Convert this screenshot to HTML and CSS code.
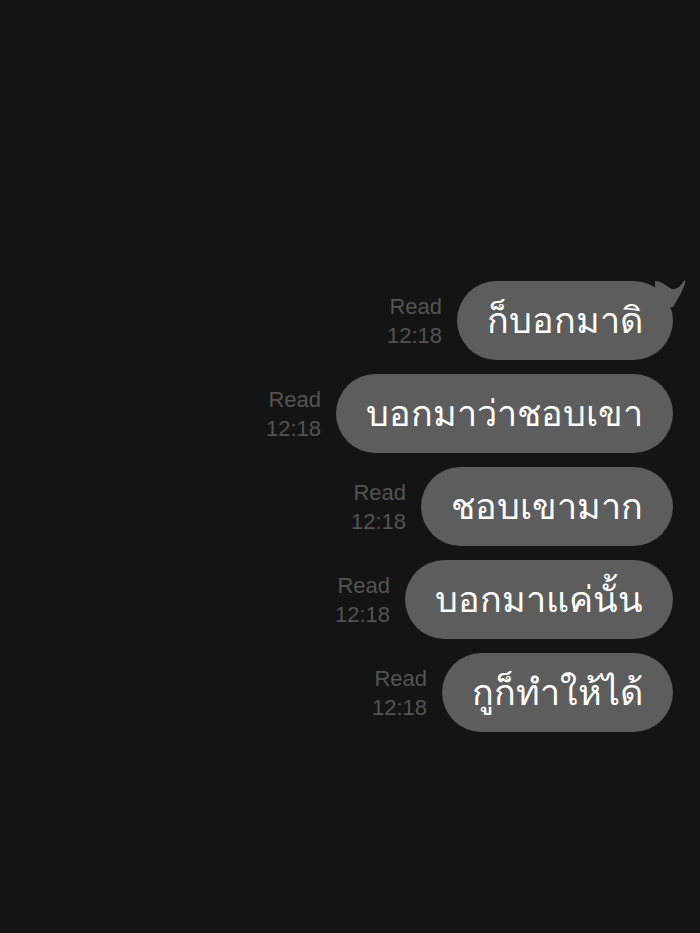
FILE: index.html
```html
<!DOCTYPE html>
<html lang="th">
<head>
    <meta charset="UTF-8">
    <meta name="viewport" content="width=device-width, initial-scale=1.0">
    <title>Chat</title>
    <link rel="stylesheet" href="styles.css">
</head>
<body>

    <div class="chat">
        <!-- Sent messages -->
        <div class="msg-row">
            <div class="meta"><span>Read</span><span>12:18</span></div>
            <div class="bubble">
                ก็บอกมาดิ
                <svg class="tail" width="32" height="30" viewBox="0 0 32 30">
                    <path d="M0 2 C8 2 13 9 17 10 C21 11 26 7 28 3 C29 1 31 1 30 4 C28 11 24 18 18 28 L0 30 Z" fill="#5d5d5d"/>
                </svg>
            </div>
        </div>
        <div class="msg-row">
            <div class="meta"><span>Read</span><span>12:18</span></div>
            <div class="bubble">บอกมาว่าชอบเขา</div>
        </div>
        <div class="msg-row">
            <div class="meta"><span>Read</span><span>12:18</span></div>
            <div class="bubble">ชอบเขามาก</div>
        </div>
        <div class="msg-row">
            <div class="meta"><span>Read</span><span>12:18</span></div>
            <div class="bubble">บอกมาแค่นั้น</div>
        </div>
        <div class="msg-row">
            <div class="meta"><span>Read</span><span>12:18</span></div>
            <div class="bubble">กูก็ทำให้ได้</div>
        </div>
    </div>

</body>
</html>
```

FILE: styles.css
```css
/* Basic Reset */
* {
    margin: 0;
    padding: 0;
    box-sizing: border-box;
}

body {
    background-color: #141414;
    font-family: "Noto Sans", "DejaVu Sans", sans-serif;
    height: 100vh;
}

.chat {
    display: flex;
    flex-direction: column;
    align-items: flex-end;
    gap: 14px;
    padding: 281px 27px 0 0;
}

.msg-row {
    display: flex;
    align-items: center;
    gap: 15px;
}

.meta {
    display: flex;
    flex-direction: column;
    align-items: flex-end;
    color: #535353;
    font-family: "Liberation Sans", "Open Sans", sans-serif;
    font-size: 22px;
    line-height: 29px;
}

.bubble {
    position: relative;
    height: 79px;
    display: flex;
    align-items: center;
    padding: 0 30px;
    background-color: #5d5d5d;
    color: #ffffff;
    font-size: 36px;
    border-radius: 40px;
}

.bubble .tail {
    position: absolute;
    right: -14px;
    top: -2px;
}
```
